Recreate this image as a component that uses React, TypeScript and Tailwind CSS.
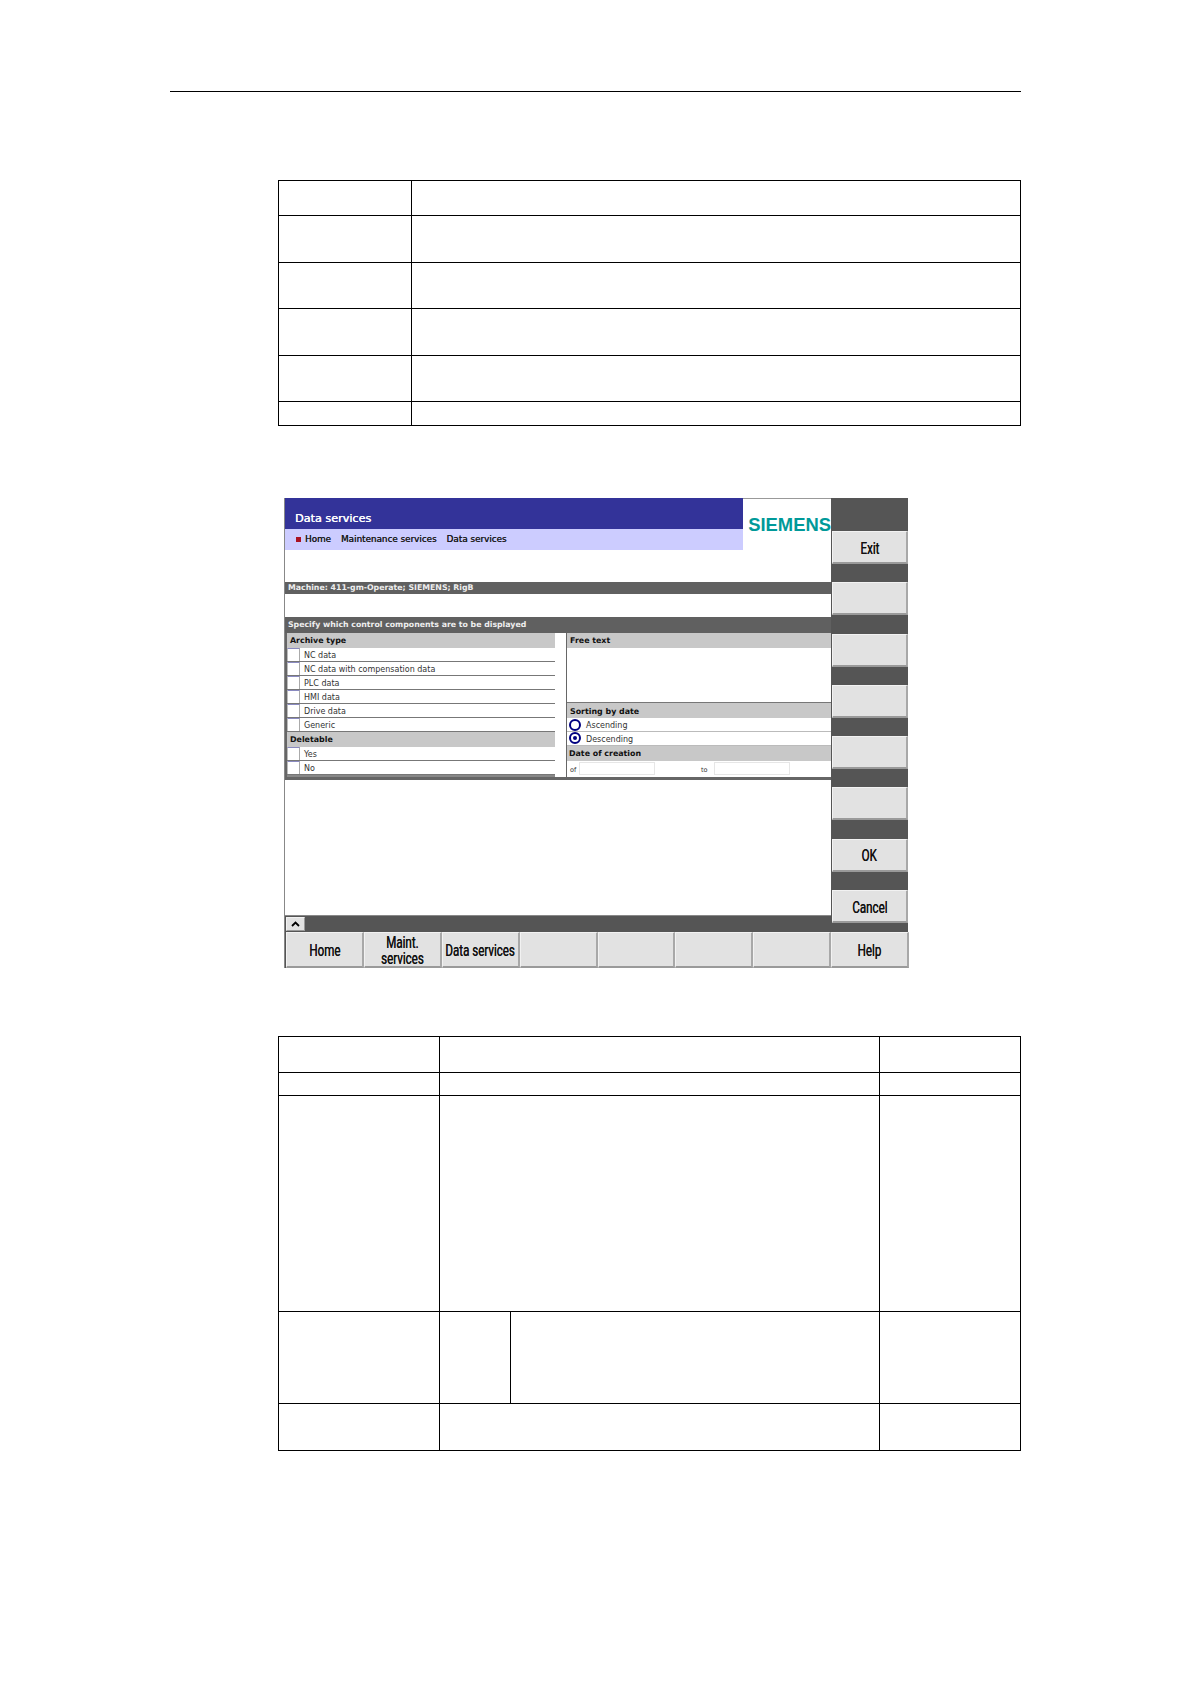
const ui = "font-['DejaVu_Sans',sans-serif]";
const narrow = "font-['Roboto','Liberation_Sans',sans-serif]";

function SoftKey({ label, className = "" }: { label?: string; className?: string }) {
  return (
    <div
      className={`flex items-center justify-center border-t border-l border-t-[#f2f2f2] border-l-[#f2f2f2] border-b-2 border-r-2 border-b-[#9a9a9a] border-r-[#a8a8a8] bg-[#e2e2e2] pt-[1px] text-center text-[17px] leading-[16px] text-[#111] [text-shadow:0.2px_0_0_#111] ${narrow} ${className}`}
    >
      <span className="scale-x-[0.68] whitespace-pre">{label}</span>
    </div>
  );
}

function SectionHead({ label, className = "" }: { label: string; className?: string }) {
  return (
    <div className={`flex items-center bg-[#c8c8c8] pl-[3px] pt-[2px] text-[7.9px] font-bold text-[#111] ${className}`}>
      {label}
    </div>
  );
}

function CheckRow({ label }: { label: string }) {
  return (
    <div className="flex h-[14px] items-stretch border-b border-[#777] bg-white">
      <div className="w-[13px] border-t border-r border-l border-t-[#8a8ac0] border-r-[#aaa] border-l-[#bbb] bg-white" />
      <span className="flex items-center pl-[4px] pt-[3px] text-[8px] text-[#333]">{label}</span>
    </div>
  );
}

function RadioRow({ label, checked, h }: { label: string; checked?: boolean; h: string }) {
  return (
    <div className={`flex items-center border-b border-[#bbb] bg-white pl-[2px] ${h}`}>
      <div className="flex h-[12px] w-[12px] items-center justify-center rounded-full border-2 border-[#000080] bg-white">
        {checked ? <div className="h-[4px] w-[4px] rounded-full bg-[#000080]" /> : null}
      </div>
      <span className="pl-[5px] pt-[3px] text-[8px] text-[#333]">{label}</span>
    </div>
  );
}

function Screen() {
  const sideKeys = ["Exit", "", "", "", "", "", "OK", "Cancel"];
  const bottomKeys = ["Home", "Maint.\nservices", "Data services", "", "", "", "", "Help"];
  return (
    <div className={`ml-[284px] mt-[72px] flex h-[470px] w-[624px] flex-col border-l border-[#888] ${ui}`}>
      <div className="flex h-[434px]">
        <div className="flex w-[546px] flex-col">
          <div className="flex h-[52px] bg-white">
            <div className="w-[458px]">
              <div className="flex h-[30.5px] items-end bg-[#333399] pb-[2px] pl-[10px] text-[11.2px] leading-[16px] text-white [text-shadow:0.3px_0_0_#fff]">
                Data services
              </div>
              <div className="flex h-[21.5px] items-center bg-[#ccccff] pl-[11px] text-[8.8px] text-[#1a1a1a] [text-shadow:0.3px_0_0_#1a1a1a]">
                <span className="mr-[4px] h-[5px] w-[5px] bg-[#aa1122]" />
                <span>Home</span>
                <span className="ml-[10px]">Maintenance services</span>
                <span className="ml-[10px]">Data services</span>
              </div>
            </div>
            <div className="flex flex-1 items-start justify-end border-t border-[#999] pt-[17px]">
              <span className="font-['Liberation_Sans',sans-serif] text-[18.4px] font-bold leading-[18px] text-[#009999]">
                SIEMENS
              </span>
            </div>
          </div>
          <div className="h-[31.5px] bg-white" />
          <div className="flex h-[12.5px] items-center bg-[#606060] pl-[3px] pt-[1px] text-[7.8px] font-bold text-[#eee]">
            Machine: 411-gm-Operate; SIEMENS; RigB
          </div>
          <div className="h-[23px] bg-white" />
          <div className="flex h-[15.5px] items-center bg-[#606060] pl-[3px] pt-[1px] text-[7.8px] font-bold text-[#eee]">
            Specify which control components are to be displayed
          </div>

          <div className="flex h-[147px] border-b-[3px] border-[#666] bg-white">
            <div className="flex h-[144px] w-[270px] flex-col border-l-2 border-[#666] bg-[#888]">
              <SectionHead label="Archive type" className="h-[15.3px]" />
              <CheckRow label="NC data" />
              <CheckRow label="NC data with compensation data" />
              <CheckRow label="PLC data" />
              <CheckRow label="HMI data" />
              <CheckRow label="Drive data" />
              <CheckRow label="Generic" />
              <SectionHead label="Deletable" className="h-[15px]" />
              <CheckRow label="Yes" />
              <CheckRow label="No" />
            </div>
            <div className="ml-[11px] flex flex-1 flex-col border-l border-[#666]">
              <SectionHead label="Free text" className="h-[15.3px]" />
              <div className="h-[55px] border-b border-[#777] bg-white" />
              <SectionHead label="Sorting by date" className="h-[15.3px]" />
              <RadioRow label="Ascending" h="h-[14px]" />
              <RadioRow label="Descending" checked h="h-[13.5px]" />
              <SectionHead label="Date of creation" className="h-[15.3px] !pl-[2px]" />
              <div className="flex flex-1 items-center bg-white pl-[3px] text-[6.5px] text-[#333]">
                <span className="w-[9px] pt-[4px]">of</span>
                <div className="h-[13px] w-[76px] border border-[#e6e6e6]" />
                <span className="ml-[46px] w-[13px] pt-[4px]">to</span>
                <div className="h-[13px] w-[76px] border border-[#e6e6e6]" />
              </div>
            </div>
          </div>

          <div className="h-[135.5px] bg-white" />
          <div className="flex h-[17px] items-end border-t border-[#888] bg-[#555] pb-[1px] pl-[1px]">
            <div className="flex h-[14px] w-[19px] items-center justify-center border border-t-[#f2f2f2] border-l-[#f2f2f2] border-r-[#999] border-b-[#999] bg-[#e2e2e2]">
              <svg width="9" height="6" viewBox="0 0 9 6">
                <path d="M1 5 L4.5 1.5 L8 5" fill="none" stroke="#000" strokeWidth="1.8" />
              </svg>
            </div>
          </div>
        </div>

        <div className="flex w-[77px] flex-col items-end gap-[18.3px] bg-[#555] pt-[33px]">
          {sideKeys.map((label, i) => (
            <SoftKey key={i} label={label} className="h-[33px] w-[76px] shrink-0" />
          ))}
        </div>
      </div>

      <div className="flex h-[36px] bg-[#555] pl-[1px]">
        {bottomKeys.map((label, i) => (
          <SoftKey key={i} label={label} className="h-full w-[77.9px] shrink-0" />
        ))}
      </div>
    </div>
  );
}

export default function App() {
  const cell = "border border-black p-0";
  const firstRows = ["h-[47px]", "h-[46px]", "h-[47px]", "h-[46px]", "h-[24px]"];
  return (
    <div className="h-[1684px] w-[1190px] overflow-hidden bg-white pt-[91px]">
      <div className="ml-[170px] h-px w-[851px] bg-black" />

      <table className="ml-[278px] mt-[88px] w-[743px] table-fixed border-collapse">
        <colgroup>
          <col className="w-[133px]" />
          <col />
        </colgroup>
        <tbody>
          <tr className="h-[35px]">
            <td className={cell} />
            <td className={cell} />
          </tr>
          {firstRows.map((h, i) => (
            <tr key={i} className={h}>
              <td className={cell} />
              <td className={cell} />
            </tr>
          ))}
        </tbody>
      </table>

      <Screen />

      <table className="ml-[278px] mt-[68px] w-[743px] table-fixed border-collapse">
        <colgroup>
          <col className="w-[161px]" />
          <col className="w-[71px]" />
          <col className="w-[369px]" />
          <col />
        </colgroup>
        <tbody>
          <tr className="h-[36px]">
            <td className={cell} />
            <td className={cell} colSpan={2} />
            <td className={cell} />
          </tr>
          <tr className="h-[23px]">
            <td className={cell} />
            <td className={cell} colSpan={2} />
            <td className={cell} />
          </tr>
          <tr className="h-[216px]">
            <td className={cell} />
            <td className={cell} colSpan={2} />
            <td className={cell} />
          </tr>
          <tr className="h-[92px]">
            <td className={cell} />
            <td className={cell} />
            <td className={cell} />
            <td className={cell} />
          </tr>
          <tr className="h-[47px]">
            <td className={cell} />
            <td className={cell} colSpan={2} />
            <td className={cell} />
          </tr>
        </tbody>
      </table>
    </div>
  );
}
